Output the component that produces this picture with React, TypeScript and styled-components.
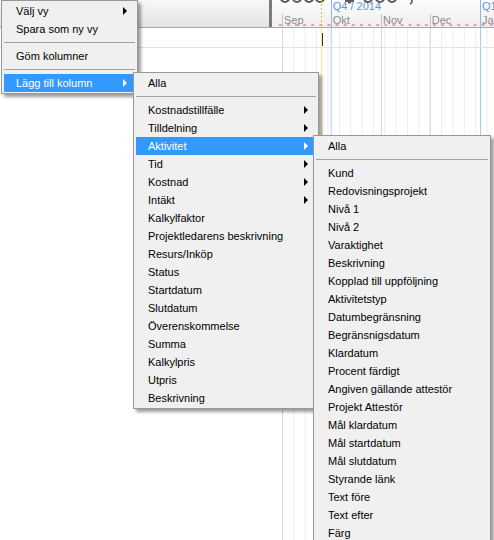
import React from 'react';
import styled, { createGlobalStyle } from 'styled-components';

const GlobalStyle = createGlobalStyle`
  html, body { margin: 0; padding: 0; background: #fff; }
  body {
    font-family: "Liberation Sans", Arial, sans-serif;
    font-size: 11px;
    overflow: hidden;
  }
`;

const DAY = 1.623;
const SEP1 = 10; // x of Sep 1 inside the timeline
const dx = (d: number) => SEP1 + d * DAY;

const Page = styled.div`
  position: relative;
  width: 494px;
  height: 540px;
  overflow: hidden;
  background: #fff;
`;

const Header = styled.div`
  display: flex;
  height: 27px;
  border-bottom: 1px solid #a9a9a9;
`;

const GridHeader = styled.div`
  width: 269px;
  background: linear-gradient(#f8f8f8, #e3e3e3);
`;

const Splitter = styled.div`
  width: 3px;
  background: #7b7b7b;
`;

const TimeHeader = styled.div`
  position: relative;
  flex: 1;
  display: flex;
  flex-direction: column;
  background: linear-gradient(#fcfcfc, #efefef);
  overflow: hidden;
`;

const ScaleRow = styled.div<{ $h: number }>`
  display: flex;
  height: ${(p) => p.$h}px;
  white-space: nowrap;
`;

const ScaleCell = styled.div<{ $line: 'none' | 'gray' | 'blue'; $color: string }>`
  flex: none;
  box-sizing: border-box;
  padding-left: 1px;
  line-height: 13px;
  overflow: hidden;
  color: ${(p) => p.$color};
  border-left: 1px solid
    ${(p) => (p.$line === 'blue' ? '#8fb8e6' : p.$line === 'gray' ? '#c4c4c4' : 'transparent')};
`;

const Body = styled.div`
  display: flex;
  height: 512px;
`;

const GridBody = styled.div`
  width: 272px;
`;

const GridRow = styled.div`
  height: 19px;
  border-bottom: 1px solid #e2e2e2;
`;

const TimeBody = styled.div`
  position: relative;
  flex: 1;
  overflow: hidden;
`;

const Canvas = styled.svg`
  position: absolute;
  left: 0;
  top: 0;
  pointer-events: none;
`;

const Menu = styled.div<{ $x: number; $y: number; $w: number }>`
  position: absolute;
  left: ${(p) => p.$x}px;
  top: ${(p) => p.$y}px;
  width: ${(p) => p.$w}px;
  box-sizing: border-box;
  background: #f0f0f0;
  border: 1px solid #979797;
  padding: 1px 2px;
  box-shadow: 3px 3px 3px rgba(0, 0, 0, 0.38);
`;

const Item = styled.div<{ $active?: boolean }>`
  position: relative;
  height: 18px;
  line-height: 18px;
  padding-left: 12px;
  white-space: nowrap;
  color: ${(p) => (p.$active ? '#fff' : '#000')};
  background: ${(p) => (p.$active ? '#3399ff' : 'transparent')};
`;

const Arrow = styled.span<{ $active?: boolean }>`
  position: absolute;
  right: 8px;
  top: 5px;
  width: 0;
  height: 0;
  border-left: 4px solid ${(p) => (p.$active ? '#fff' : '#000')};
  border-top: 4px solid transparent;
  border-bottom: 4px solid transparent;
`;

const Separator = styled.div`
  height: 1px;
  margin: 4px 0;
  background: #a3a3a3;
`;

type Entry = { label: string; sub?: boolean; active?: boolean } | 'sep';

const MenuList: React.FC<{ items: Entry[]; x: number; y: number; w: number }> = ({ items, x, y, w }) => (
  <Menu $x={x} $y={y} $w={w}>
    {items.map((it, i) =>
      it === 'sep' ? (
        <Separator key={i} />
      ) : (
        <Item key={i} $active={it.active}>
          {it.label}
          {it.sub && <Arrow $active={it.active} />}
        </Item>
      )
    )}
  </Menu>
);

const menu1: Entry[] = [
  { label: 'Välj vy', sub: true },
  { label: 'Spara som ny vy' },
  'sep',
  { label: 'Göm kolumner' },
  'sep',
  { label: 'Lägg till kolumn', sub: true, active: true },
];

const menu2: Entry[] = [
  { label: 'Alla' },
  'sep',
  { label: 'Kostnadstillfälle', sub: true },
  { label: 'Tilldelning', sub: true },
  { label: 'Aktivitet', sub: true, active: true },
  { label: 'Tid', sub: true },
  { label: 'Kostnad', sub: true },
  { label: 'Intäkt', sub: true },
  ...[
    'Kalkylfaktor',
    'Projektledarens beskrivning',
    'Resurs/Inköp',
    'Status',
    'Startdatum',
    'Slutdatum',
    'Överenskommelse',
    'Summa',
    'Kalkylpris',
    'Utpris',
    'Beskrivning',
  ].map((label) => ({ label })),
];

const menu3: Entry[] = [
  { label: 'Alla' },
  'sep',
  ...[
    'Kund',
    'Redovisningsprojekt',
    'Nivå 1',
    'Nivå 2',
    'Varaktighet',
    'Beskrivning',
    'Kopplad till uppföljning',
    'Aktivitetstyp',
    'Datumbegränsning',
    'Begränsnigsdatum',
    'Klardatum',
    'Procent färdigt',
    'Angiven gällande attestör',
    'Projekt Attestör',
    'Mål klardatum',
    'Mål startdatum',
    'Mål slutdatum',
    'Styrande länk',
    'Text före',
    'Text efter',
    'Färg',
  ].map((label) => ({ label })),
];

type Span = { label: string; days: number; line: 'none' | 'gray' | 'blue' };

// visible part of Q3 starts at -SEP1/DAY days before Sep 1
const quarters: Span[] = [
  { label: '', days: 30 + SEP1 / DAY, line: 'none' },
  { label: 'Q4 / 2014', days: 92, line: 'blue' },
  { label: 'Q1', days: 90, line: 'blue' },
];

const months: Span[] = [
  { label: '', days: SEP1 / DAY, line: 'none' },
  { label: 'Sep', days: 30, line: 'gray' },
  { label: 'Okt', days: 31, line: 'blue' },
  { label: 'Nov', days: 30, line: 'gray' },
  { label: 'Dec', days: 31, line: 'gray' },
  { label: 'Ja', days: 31, line: 'blue' },
];

const monthStarts = [
  { d: -31, q: false },
  { d: 0, q: false },
  { d: 30, q: true },
  { d: 61, q: false },
  { d: 91, q: false },
  { d: 122, q: true },
];

const TODAY = 49.5;

const weeks = Array.from({ length: 26 }, (_, k) => dx((k - 5) * 7));
const ticks = Array.from({ length: 30 }, (_, k) => dx(k * 5 - 2));

const HeaderDrawing = () => (
  <Canvas width={222} height={27}>
    {[13, 25, 37, 48, 96, 108, 120].map((cx, i) => (
      <circle key={i} cx={cx} cy={-2} r={4} fill="none" stroke="#5a5a5a" strokeWidth={2.2} />
    ))}
    <rect x={73} y={0} width={9} height={2} fill="#5a5a5a" />
    <rect x={76} y={2} width={3} height={1.5} fill="#5a5a5a" />
    <path d="M138 -2 Q142 2 138 4" fill="none" stroke="#5a5a5a" strokeWidth={1.6} />
    {ticks.map((x, i) => (
      <rect key={i} x={x} y={24} width={3} height={2} fill="#d8a7a7" />
    ))}
    <line x1={TODAY} x2={TODAY} y1={0} y2={27} stroke="#e5b43c" strokeDasharray="2 2" />
  </Canvas>
);

const BodyDrawing = () => (
  <Canvas width={222} height={512}>
    {weeks.map((x, i) => (
      <line key={i} x1={x + 0.5} x2={x + 0.5} y1={0} y2={512} stroke="#ededed" />
    ))}
    {monthStarts.map((m) => (
      <line
        key={m.d}
        x1={dx(m.d) + 0.5}
        x2={dx(m.d) + 0.5}
        y1={0}
        y2={512}
        stroke={m.q ? '#aacbec' : '#d8d8d8'}
      />
    ))}
    <line x1={TODAY} x2={TODAY} y1={0} y2={512} stroke="#f7e6a8" />
    <line x1={0} x2={222} y1={19.5} y2={19.5} stroke="#e2e2e2" />
    <line x1={50.5} x2={50.5} y1={5} y2={18} stroke="#333" />
  </Canvas>
);

const Scale: React.FC<{ spans: Span[]; h: number; color: string }> = ({ spans, h, color }) => (
  <ScaleRow $h={h}>
    {spans.map((s, i) => (
      <ScaleCell key={i} $line={s.line} $color={color} style={{ width: s.days * DAY }}>
        {s.label}
      </ScaleCell>
    ))}
  </ScaleRow>
);

export default function App() {
  return (
    <Page>
      <GlobalStyle />
      <Header>
        <GridHeader />
        <Splitter />
        <TimeHeader>
          <Scale spans={quarters} h={14} color="#5a98d8" />
          <Scale spans={months} h={13} color="#8c8c8c" />
          <HeaderDrawing />
        </TimeHeader>
      </Header>
      <Body>
        <GridBody>
          <GridRow />
        </GridBody>
        <TimeBody>
          <BodyDrawing />
        </TimeBody>
      </Body>
      <MenuList items={menu1} x={1} y={0} w={137} />
      <MenuList items={menu2} x={133} y={72} w={186} />
      <MenuList items={menu3} x={313} y={135} w={178} />
    </Page>
  );
}
